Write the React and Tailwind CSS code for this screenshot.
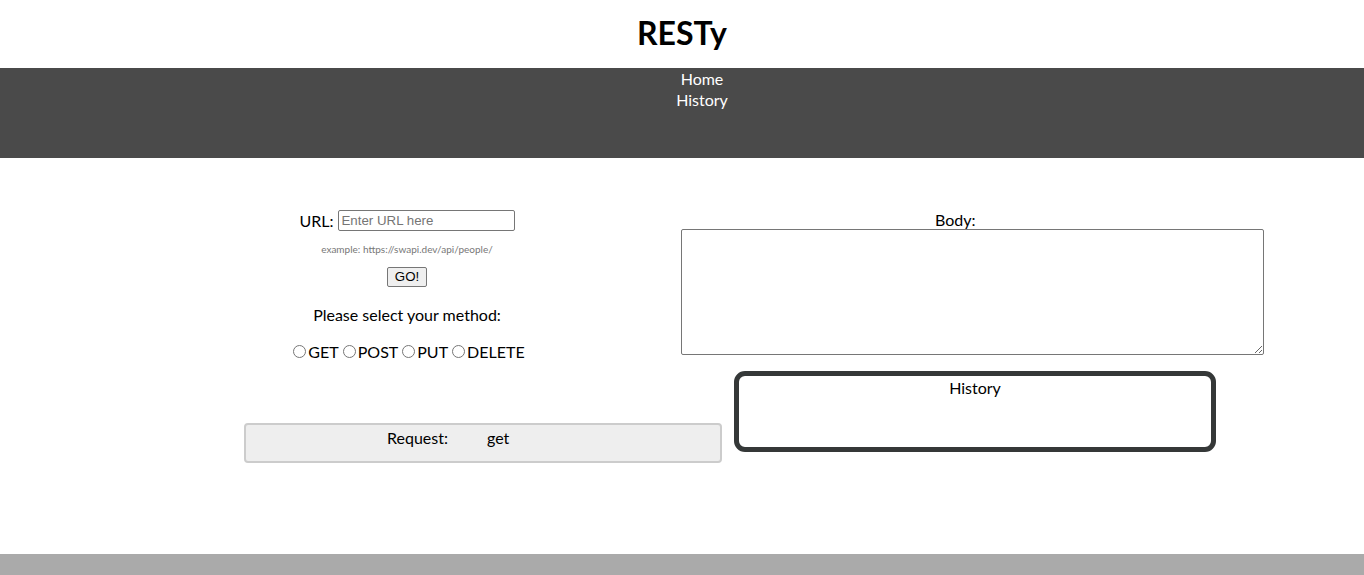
import React from 'react';

function Header() {
  return (
    <header className="bg-white">
      <h1 className="h-[68px] flex items-center justify-center text-[32px] font-bold text-black pb-[2px]">RESTy</h1>
      <nav className="bg-[#4a4a4a] h-[90px] flex flex-col items-center pl-[40px] text-white text-[16px] leading-[21px]">
        <a href="#">Home</a>
        <a href="#">History</a>
      </nav>
    </header>
  );
}

function Form() {
  const methods = ['GET', 'POST', 'PUT', 'DELETE'];
  return (
    <div className="w-[414px] flex flex-col items-center text-[16px] text-black">
      <label className="flex items-center gap-[4px] h-[21px]">
        <span>URL:</span>
        <input
          type="text"
          placeholder="Enter URL here"
          className="w-[177px] h-[21px] border border-[#767676] rounded-[2px] px-[3px] text-[13.3px] font-['Liberation_Sans',sans-serif] placeholder:text-[#757575]"
        />
      </label>
      <p className="mt-[12px] text-[10px] text-[#777] leading-[12px]">example: https://swapi.dev/api/people/</p>
      <button className="mt-[12px] h-[20px] px-[7px] border border-[#767676] rounded-[2px] bg-[#efefef] text-[13.3px] font-['Liberation_Sans',sans-serif] leading-none">GO!</button>
      <p className="mt-[17px] leading-[21px]">Please select your method:</p>
      <div className="mt-[16px] flex items-center leading-[21px]">
        {methods.map((m) => (
          <label key={m} className="flex items-center">
            <input type="radio" name="method" className="w-[13px] h-[13px] ml-[4px] mr-[2px] accent-[#767676]" />
            <span>{m}</span>
          </label>
        ))}
      </div>
    </div>
  );
}

export default function App() {
  return (
    <div className="min-h-[575px] flex flex-col bg-white font-['Lato','Noto_Sans',sans-serif] text-black">
      <Header />
      <main className="flex-grow">
        <div className="flex mt-[52px]">
          <div className="ml-[200px]">
            <Form />
          </div>
          <div className="ml-[67px] flex flex-col">
            <p className="ml-[254px] leading-[21px] h-[20px] -mt-[1px] text-[16px]">Body:</p>
            <textarea className="w-[583px] h-[126px] border border-[#767676] rounded-[2px] block resize" />
          </div>
        </div>
        <div className="flex items-start mt-[9px] ml-[244px] gap-[12px]">
          <div className="mt-[52px] w-[478px] h-[40px] bg-[#eee] border-2 border-[#ccc] rounded-[4px] flex pl-[141px] pt-[2px] text-[16px] leading-[21px]">
            <span>Request:</span>
            <span className="ml-[39px]">get</span>
          </div>
          <div className="w-[482px] h-[81px] border-[5px] border-[#353838] rounded-[11px] flex justify-center pt-[1px] text-[16px] leading-[21px]">
            History
          </div>
        </div>
      </main>
      <footer className="h-[21px] bg-[#aaa]" />
    </div>
  );
}
